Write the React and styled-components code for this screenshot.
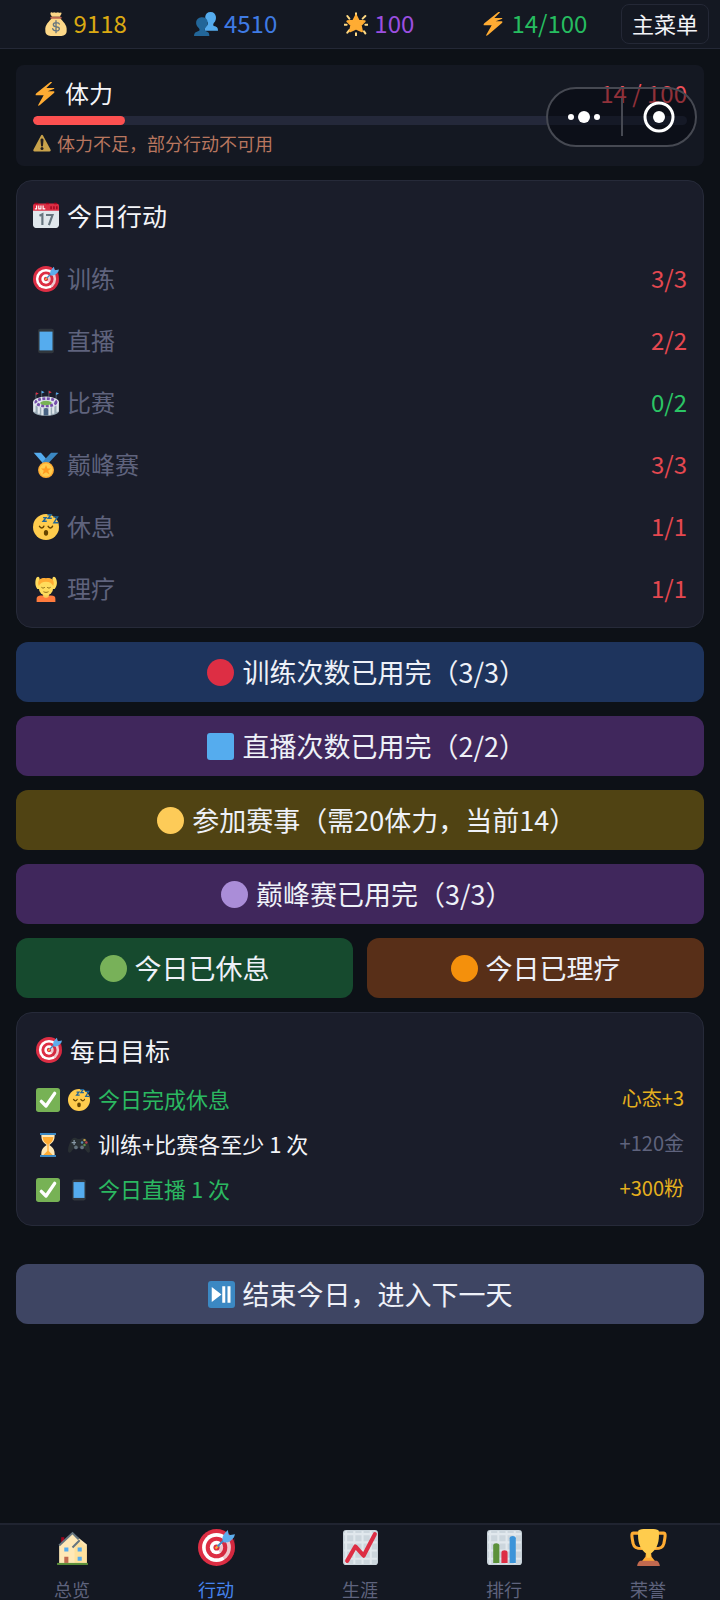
import styled, { createGlobalStyle } from "styled-components";

const GlobalStyle = createGlobalStyle`
    *{
        box-sizing:border-box;
    }
    body{
        margin:0;
        background-color:#0d1117;
        color:#f3f4f8;
        font-family:"Noto Sans CJK SC", "Noto Sans", sans-serif;
    }
    button{
        font-family:inherit;
    }
`

const Page = styled.div`
    min-height:100vh;
    display:flex;
    flex-direction:column;
    position:relative;
`

const TopBar = styled.header`
    height:49px;
    padding-right:11px;
    display:flex;
    align-items:center;
    background-color:#141822;
    border-bottom:1px solid #242836;
`

const Stats = styled.div`
    flex:1;
    padding-left:10px;
    display:flex;
    justify-content:space-around;
`

const Stat = styled.div`
    display:flex;
    align-items:center;
    column-gap:6px;
    padding-bottom:2px;
    font-size:24px;
    line-height:32px;
    color:${props => props.$color};
    svg{
        margin-top:2px;
    }
`

const MenuBtn = styled.button`
    height:40px;
    padding:0 10px 2px;
    border:1px solid #242836;
    border-radius:8px;
    background-color:#141822;
    color:#f3f4f8;
    font-size:22px;
    line-height:32px;
`

const Main = styled.main`
    flex:1;
    padding:16px;
    display:flex;
    flex-direction:column;
    row-gap:14px;
`

const EnergyCard = styled.section`
    height:101px;
    padding:11px 17px;
    border-radius:8px;
    background-color:#141822;
`

const Spread = styled.div`
    display:flex;
    align-items:center;
    justify-content:space-between;
    height:32px;
    margin-bottom:8px;
    font-size:24px;
`

const IconText = styled.span`
    display:flex;
    align-items:center;
    column-gap:8px;
    svg{
        margin-top:4px;
    }
`

const EnergyValue = styled.span`
    color:#f0505a;
`

const Track = styled.div`
    height:9px;
    border-radius:5px;
    background-color:#24283a;
    overflow:hidden;
`

const Fill = styled.div`
    height:100%;
    border-radius:5px;
    background-color:#fc5050;
`

const Warning = styled.p`
    margin:4px 0 0;
    display:flex;
    align-items:center;
    column-gap:6px;
    font-size:18px;
    line-height:28px;
    color:#b8765f;
`

const Card = styled.section`
    padding:${props => props.$padding};
    border:1px solid #262a39;
    border-radius:16px;
    background-color:#1a1d2a;
`

const CardTitle = styled.h2`
    margin:0;
    display:flex;
    align-items:center;
    column-gap:8px;
    height:36px;
    font-size:25px;
    font-weight:400;
`

const List = styled.ul`
    margin:${props => props.$top}px 0 0;
    padding:0;
    list-style:none;
`

const ActionRow = styled.li`
    height:62px;
    display:flex;
    align-items:center;
    justify-content:space-between;
    font-size:24px;
    color:#5f637d;
`

const Count = styled.span`
    color:${props => props.$open ? "#2bc565" : "#e54850"};
`

const GoalRow = styled.li`
    height:45px;
    display:flex;
    align-items:center;
    justify-content:space-between;
    font-size:22px;
    color:${props => props.$done ? "#2bb861" : "#f3f4f8"};
`

const Reward = styled.span`
    font-size:20px;
    color:${props => props.$done ? "#e5b01e" : "#5f637d"};
`

const BtnRow = styled.div`
    display:flex;
    column-gap:14px;
`

const ActionBtn = styled.button`
    flex:1 0 auto;
    height:60px;
    padding:0;
    display:flex;
    align-items:center;
    justify-content:center;
    column-gap:8px;
    border:none;
    border-radius:12px;
    background-color:${props => props.$bg};
    color:#eef1f8;
    font-size:27px;
    line-height:40px;
`

const Half = styled.span`
    font-feature-settings:"halt";
`

const EndDay = styled.div`
    margin-top:24px;
    display:flex;
`

const TabBar = styled.nav`
    height:77px;
    padding-top:4px;
    display:flex;
    border-top:2px solid #202431;
    background-color:#141822;
`

const Tab = styled.a`
    flex:1;
    display:flex;
    flex-direction:column;
    align-items:center;
    row-gap:14px;
    font-size:18px;
    line-height:18px;
    text-decoration:none;
    color:${props => props.$active ? "#4583ee" : "#5f637d"};
`

/* floats over the page, see-through */
const Capsule = styled.div`
    position:absolute;
    top:87px;
    right:23px;
    width:151px;
    height:60px;
    display:flex;
    align-items:center;
    border:2px solid #464952;
    border-radius:30px;
    background-color:rgba(0, 3, 10, 0.4);
`

const CapsuleBtn = styled.button`
    flex:1;
    height:38px;
    padding:0;
    display:flex;
    align-items:center;
    justify-content:center;
    border:none;
    background:none;
    & + &{
        border-left:2px solid #464952;
    }
`

const ICONS = {
    money: <>
        <path fill="#FDD888" d="M12 9C8 14 1 19 2 28c0 5 3 7 8 8h16c5-1 8-3 8-8 1-9-6-14-10-19z"/>
        <path fill="#FDD888" d="M12 7C10 4 9 3 10 1c1-2 3 1 4 0s2 0 4 0 3-1 4 0 3-1 4 0c1 2-1 3-2 6z"/>
        <path fill="#BF6952" d="M11 7h14c2 0 2 3 0 3H11c-2 0-2-3 0-3z"/>
        <path fill="none" stroke="#67757F" strokeWidth="2" strokeLinecap="round" d="M18 13v18M23 18c-1-3-9-3-9 1 0 5 9 2 9 6 0 5-9 4-10 0"/>
    </>,
    fans: <>
        <path fill="#55ACEE" d="M16 28v-5c0-2 3-2 4-3l1-4c-6-4-6-16 4-16 9 0 10 12 5 16-1 1-2 4 0 5 4 1 6 2 6 7z"/>
        <path fill="#226699" d="M0 36c0-4 2-6 6-7 3-1 3-3 1-5-6-5-5-15 4-16 11-1 12 11 6 16-2 2-1 4 1 5 4 1 5 3 5 7z"/>
    </>,
    star: <>
        <path stroke="#FFD983" strokeWidth="3" strokeLinecap="round" d="M18 2v2M18 32v3M5 6l3 4M30 29l2 3M32 6l-4 4M5 31l3-4M1 19h3M32 19h3"/>
        <path fill="#FFAC33" stroke="#FFAC33" strokeWidth="3" strokeLinejoin="round" d="M18 5l4 8 9 1-6 6 2 9-9-4-9 4 2-9-6-6 9-1z"/>
    </>,
    bolt: <path fill="#FFAC33" d="M32 10c0-1-1-1-1-1H20L28 1c1-1 0-2-2-1L5 17c-1 1-2 3 0 3h11l-8 14c-1 2 0 2 2 1l21-18c1-1 2-3 0-3H22z"/>,
    warn: <>
        <path fill="#C9A34B" d="M3 35c-2 0-3-2-2-4L16 3c1-2 3-2 4 0l15 28c1 2 0 4-2 4z"/>
        <path fill="#231F20" d="M15 12c0-4 6-4 6 0l-1 11c0 3-4 3-4 0z"/>
        <circle fill="#231F20" cx="18" cy="29" r="3"/>
    </>,
    calendar: <>
        <path fill="#E0E7EC" d="M0 10h36v22c0 2-2 4-4 4H4c-2 0-4-2-4-4z"/>
        <path fill="#DD2E44" d="M0 12V5c0-2 2-3 4-3h28c2 0 4 1 4 3v7z"/>
        <path fill="#A0041E" d="M2 1h5v2H2zM18 1h4v2h-4zM29 1h4v2h-4zM24 6h2v4h-2zM28 6h2v4h-2zM32 6h2v4h-2z"/>
        <path fill="none" stroke="#fff" strokeWidth="1.6" d="M5 5v4.500H2.500M8 5v4.500h3V5M14 5v4.500h3"/>
        <path fill="none" stroke="#66757F" strokeWidth="3" d="M9 19l4-2v15M18 18h9l-5 14"/>
    </>,
    target: <>
        <circle fill="#DD2E44" cx="18" cy="18" r="18"/>
        <circle fill="#fff" cx="18" cy="18" r="14"/>
        <circle fill="#DD2E44" cx="18" cy="18" r="10.500"/>
        <circle fill="#fff" cx="18" cy="18" r="6.500"/>
        <circle fill="#DD2E44" cx="18" cy="18" r="3"/>
        <path fill="#BB1A34" opacity="0.25" d="M18 18l10 15c5-3 8-9 8-15V9z"/>
        <path stroke="#FFAC33" strokeWidth="2" d="M17 19l3-3"/>
        <path stroke="#4289C1" strokeWidth="2" d="M19 17l11-11"/>
        <path fill="#5DADEC" d="M24 11c-1-4 2-7 5-10l1 5 6-1-1 3c-3 4-6 6-10 5z"/>
    </>,
    phone: <>
        <rect fill="#31373D" x="7" y="1" width="22" height="34" rx="3"/>
        <path fill="#55ACEE" d="M9 5h18v26H9z"/>
    </>,
    stadium: <>
        <path stroke="#66757F" strokeWidth="1" d="M4 4v12M12 1v12M22 1v12M32 4v12"/>
        <path fill="#DD2E44" d="M4 3l4 2-4 2zM22 1l4 2-4 2z"/>
        <path fill="#55ACEE" d="M12 1l4 2-4 2zM32 3l4 2-4 2z"/>
        <path fill="#99AAB5" d="M0 17h36v12c-2 9-34 9-36 0z"/>
        <path stroke="#E1E8ED" strokeWidth="3" d="M2 19v11M8 22v11M28 22v11M34 19v11M13 23v12M23 23v12"/>
        <path fill="#4A6484" d="M15 35v-7c0-4 6-4 6 0v7z"/>
        <ellipse fill="#E1E8ED" cx="18" cy="17" rx="18" ry="8"/>
        <ellipse fill="none" stroke="#744EAA" strokeWidth="4" strokeDasharray="4 2" cx="18" cy="17" rx="14" ry="5"/>
        <ellipse fill="#77B255" cx="18" cy="18" rx="8" ry="3"/>
    </>,
    medal: <>
        <path fill="#55ACEE" d="M18 9L11 1H1l13 15 4-4z"/>
        <path fill="#3B88C3" d="M25 1L13 14l7 3L35 1z"/>
        <circle fill="#FFAC33" cx="18" cy="25" r="11"/>
        <circle fill="#FFCC4D" cx="18" cy="25" r="9"/>
        <path fill="#FF9B21" d="M18 18l2 5h5l-4 3 2 5-5-3-5 3 2-5-4-3h5z"/>
    </>,
    sleep: <>
        <circle fill="#FFCC4D" cx="18" cy="18" r="18"/>
        <path fill="none" stroke="#664500" strokeWidth="2" strokeLinecap="round" d="M9 17c2 3 5 3 6 0M21 17c2 3 5 3 6 0"/>
        <ellipse fill="#664500" cx="18" cy="26" rx="3" ry="4"/>
        <path fill="none" stroke="#226699" strokeWidth="2" d="M14 5h4l-4 5h5M20 1h5l-4 5h5M28 4h6l-5 8h6"/>
    </>,
    massage: <>
        <path fill="#FFDC5D" d="M6 18C2 13 3 5 5 2c3-3 5 1 4 5h18c-1-4 1-8 4-5 3 5 3 11-1 16z"/>
        <path fill="#FF7B3D" d="M5 36v-4c0-4 3-5 6-5h14c4 0 6 1 6 5v4z"/>
        <path fill="#F9CA55" d="M14 22h8v6c-2 3-6 3-8 0z"/>
        <ellipse fill="#FFDC5D" cx="18" cy="16" rx="10" ry="11"/>
        <path fill="#FFAC33" d="M8 14C5 4 12 2 18 3c7-1 13 2 10 11-2-4-5-6-10-6s-8 2-10 6z"/>
        <path fill="none" stroke="#664500" strokeWidth="1" strokeLinecap="round" d="M12 16c1 1 3 1 4 0M20 16c1 1 3 1 4 0M15 22c2 1 4 1 6 0"/>
    </>,
    red: <circle fill="#DD2E44" cx="18" cy="18" r="18"/>,
    blue: <rect fill="#55ACEE" width="36" height="36" rx="4"/>,
    yellow: <circle fill="#FDCB58" cx="18" cy="18" r="18"/>,
    purple: <circle fill="#AA8DD8" cx="18" cy="18" r="18"/>,
    green: <circle fill="#78B159" cx="18" cy="18" r="18"/>,
    orange: <circle fill="#F4900C" cx="18" cy="18" r="18"/>,
    check: <>
        <rect fill="#77B255" width="36" height="36" rx="4"/>
        <path fill="none" stroke="#fff" strokeWidth="5" strokeLinecap="round" strokeLinejoin="round" d="M8 20l7 7L28 8"/>
    </>,
    hourglass: <>
        <path fill="#FFE8B6" d="M8 3h20c0 8-2 11-8 15 6 4 8 7 8 15H8c0-8 2-11 8-15-6-4-8-7-8-15z"/>
        <path fill="#FFAC33" d="M10 6h16c0 5-3 9-7 11v10l6 6H11l6-6V17c-4-2-7-6-7-11z"/>
        <path fill="#3B88C3" d="M6 0h24v3H6zM6 33h24v3H6z"/>
    </>,
    gamepad: <>
        <path fill="#292F33" d="M8 7c3-2 6 0 8 1h4c2-1 5-3 8-1 5 4 8 15 8 21-1 4-4 3-6 0l-4-5H10l-4 5c-2 3-5 4-6 0C0 22 3 11 8 7z"/>
        <path stroke="#8899A6" strokeWidth="2" d="M6 14h7M10 10v8"/>
        <circle fill="#C9A34B" cx="27" cy="10" r="2"/>
        <circle fill="#B8404C" cx="30" cy="14" r="2"/>
        <circle fill="#5C8F48" cx="27" cy="18" r="2"/>
        <circle fill="#5A8CB0" cx="23" cy="14" r="2"/>
        <circle fill="#66757F" cx="13" cy="22" r="3"/>
        <circle fill="#66757F" cx="23" cy="22" r="3"/>
    </>,
    playPause: <>
        <rect fill="#3B88C3" width="36" height="36" rx="4"/>
        <path fill="#fff" d="M5 8l13 10L5 28zM19 7h4v22h-4zM26 7h4v22h-4z"/>
    </>,
    house: <>
        <path fill="#A0041E" d="M7 8h3v7H7z"/>
        <path fill="#FFE8B6" d="M5 16L18 4l14 11v19H5z"/>
        <path fill="#FFD983" d="M20 18l5-6 7 6v16H20z" opacity="0.5"/>
        <path fill="none" stroke="#66757F" strokeWidth="2" d="M5 16L18 4l6 6M18 18l7-7"/>
        <path fill="#55ACEE" d="M10 18h4v4h-4zM23 18h4v4h-4zM23 27h4v4h-4z"/>
        <path fill="#C1694F" d="M10 27h4v6h-4z"/>
        <path fill="#5C913B" d="M3 33h30v2H3z"/>
    </>,
    chart: <>
        <rect fill="#CCD6DD" x="1" y="1" width="34" height="34" rx="3"/>
        <path stroke="#E1E8ED" strokeWidth="2" d="M4 2v32M12 2v32M20 2v32M28 2v32M2 5h32M2 13h32M2 21h32M2 29h32"/>
        <path fill="none" stroke="#DD2E44" strokeWidth="4" strokeLinecap="round" strokeLinejoin="round" d="M5 31l8-14 8 9L32 5"/>
    </>,
    bars: <>
        <rect fill="#CCD6DD" x="1" y="1" width="34" height="34" rx="3"/>
        <path stroke="#E1E8ED" strokeWidth="2" d="M4 2v32M12 2v32M20 2v32M28 2v32M2 5h32M2 13h32M2 21h32M2 29h32"/>
        <path fill="#5C913B" d="M7 16c0-3 6-3 6 0v17H7z"/>
        <path fill="#DD2E44" d="M15 23c0-3 6-3 6 0v10h-6z"/>
        <path fill="#3B94D9" d="M23 9c0-3 6-3 6 0v24h-6z"/>
    </>,
    trophy: <>
        <path fill="none" stroke="#FFAC33" strokeWidth="3" strokeLinejoin="round" d="M10 4H3c-2 0-1 5 0 10 1 4 3 5 9 5M26 4h7c2 0 1 5 0 10-1 4-3 5-9 5"/>
        <path fill="#FFAC33" d="M16 20h4l1 7 4 5H11l4-5z"/>
        <path fill="#FFCC4D" d="M8 2c0-3 20-3 20 0 1 11-2 18-8 22v4h-4v-4C10 20 7 13 8 2z"/>
        <path fill="#C1694F" d="M10 31h16c1 0 3 3 3 5H7c0-2 2-5 3-5z"/>
    </>,
}

const Icon = ({ name, size }) => (
    <svg width={size} height={size} viewBox="0 0 36 36" aria-hidden="true">{ICONS[name]}</svg>
)

const energy = { now: 14, max: 100 }

const stats = [
    { icon: "money", value: "9118", color: "#dba912" },
    { icon: "fans", value: "4510", color: "#3f7be4" },
    { icon: "star", value: "100", color: "#9c4fe0" },
    { icon: "bolt", value: "14/100", color: "#26bd60" },
]

const actions = [
    { icon: "target", name: "训练", used: 3, max: 3 },
    { icon: "phone", name: "直播", used: 2, max: 2 },
    { icon: "stadium", name: "比赛", used: 0, max: 2 },
    { icon: "medal", name: "巅峰赛", used: 3, max: 3 },
    { icon: "sleep", name: "休息", used: 1, max: 1 },
    { icon: "massage", name: "理疗", used: 1, max: 1 },
]

const buttons = [
    [{ icon: "red", text: "训练次数已用完", note: "3/3", bg: "#1e345d" }],
    [{ icon: "blue", text: "直播次数已用完", note: "2/2", bg: "#40275c" }],
    [{ icon: "yellow", text: "参加赛事", note: "需20体力，当前14", bg: "#504313" }],
    [{ icon: "purple", text: "巅峰赛已用完", note: "3/3", bg: "#40275c" }],
    [
        { icon: "green", text: "今日已休息", bg: "#164a2e" },
        { icon: "orange", text: "今日已理疗", bg: "#582f18" },
    ],
]

const goals = [
    { icon: "sleep", text: "今日完成休息", reward: "心态+3", done: true },
    { icon: "gamepad", text: "训练+比赛各至少 1 次", reward: "+120金", done: false },
    { icon: "phone", text: "今日直播 1 次", reward: "+300粉", done: true },
]

const tabs = [
    { icon: "house", text: "总览", href: "#overview" },
    { icon: "target", text: "行动", href: "#actions", active: true },
    { icon: "chart", text: "生涯", href: "#career" },
    { icon: "bars", text: "排行", href: "#ranking" },
    { icon: "trophy", text: "荣誉", href: "#honors" },
]

const App = () => {
    return(
        <Page>
            <GlobalStyle/>
            <TopBar>
                <Stats>
                    {stats.map(s => (
                        <Stat key={s.icon} $color={s.color}>
                            <Icon name={s.icon} size={24}/>
                            {s.value}
                        </Stat>
                    ))}
                </Stats>
                <MenuBtn>主菜单</MenuBtn>
            </TopBar>
            <Main>
                <EnergyCard>
                    <Spread>
                        <IconText><Icon name="bolt" size={24}/>体力</IconText>
                        <EnergyValue>{energy.now} / {energy.max}</EnergyValue>
                    </Spread>
                    <Track role="progressbar" aria-label="体力" aria-valuenow={energy.now} aria-valuemax={energy.max}>
                        <Fill style={{ width: `${energy.now / energy.max * 100}%` }}/>
                    </Track>
                    <Warning><Icon name="warn" size={18}/>体力不足，部分行动不可用</Warning>
                </EnergyCard>
                <Card $padding="16px 16px 9px">
                    <CardTitle><Icon name="calendar" size={26}/>今日行动</CardTitle>
                    <List $top={13}>
                        {actions.map(a => (
                            <ActionRow key={a.name}>
                                <IconText><Icon name={a.icon} size={26}/>{a.name}</IconText>
                                <Count $open={a.used < a.max}>{a.used}/{a.max}</Count>
                            </ActionRow>
                        ))}
                    </List>
                </Card>
                {buttons.map((row, i) => (
                    <BtnRow key={i}>
                        {row.map(b => (
                            <ActionBtn key={b.text} $bg={b.bg} disabled>
                                <Icon name={b.icon} size={27}/>
                                <span>{b.text}{b.note && <>（{b.note}<Half>）</Half></>}</span>
                            </ActionBtn>
                        ))}
                    </BtnRow>
                ))}
                <Card $padding="19px 19px 15px">
                    <CardTitle><Icon name="target" size={26}/>每日目标</CardTitle>
                    <List $top={7}>
                        {goals.map(g => (
                            <GoalRow key={g.text} $done={g.done}>
                                <IconText>
                                    <Icon name={g.done ? "check" : "hourglass"} size={24}/>
                                    <Icon name={g.icon} size={22}/>
                                    {g.text}
                                </IconText>
                                <Reward $done={g.done}>{g.reward}</Reward>
                            </GoalRow>
                        ))}
                    </List>
                </Card>
                <EndDay>
                    <ActionBtn $bg="#3e4563">
                        <Icon name="playPause" size={27}/>
                        <span>结束今日，进入下一天</span>
                    </ActionBtn>
                </EndDay>
            </Main>
            <TabBar>
                {tabs.map(t => (
                    <Tab key={t.text} href={t.href} $active={t.active}>
                        <Icon name={t.icon} size={37}/>
                        {t.text}
                    </Tab>
                ))}
            </TabBar>
            <Capsule>
                <CapsuleBtn aria-label="更多">
                    <svg width="32" height="12" viewBox="0 0 32 12" fill="#fff">
                        <circle cx="3" cy="6" r="3"/>
                        <circle cx="16" cy="6" r="6"/>
                        <circle cx="29" cy="6" r="3"/>
                    </svg>
                </CapsuleBtn>
                <CapsuleBtn aria-label="关闭">
                    <svg width="32" height="32" viewBox="0 0 32 32">
                        <circle cx="16" cy="16" r="14" fill="none" stroke="#fff" strokeWidth="3"/>
                        <circle cx="16" cy="16" r="6" fill="#fff"/>
                    </svg>
                </CapsuleBtn>
            </Capsule>
        </Page>
    )
}

export default App;
